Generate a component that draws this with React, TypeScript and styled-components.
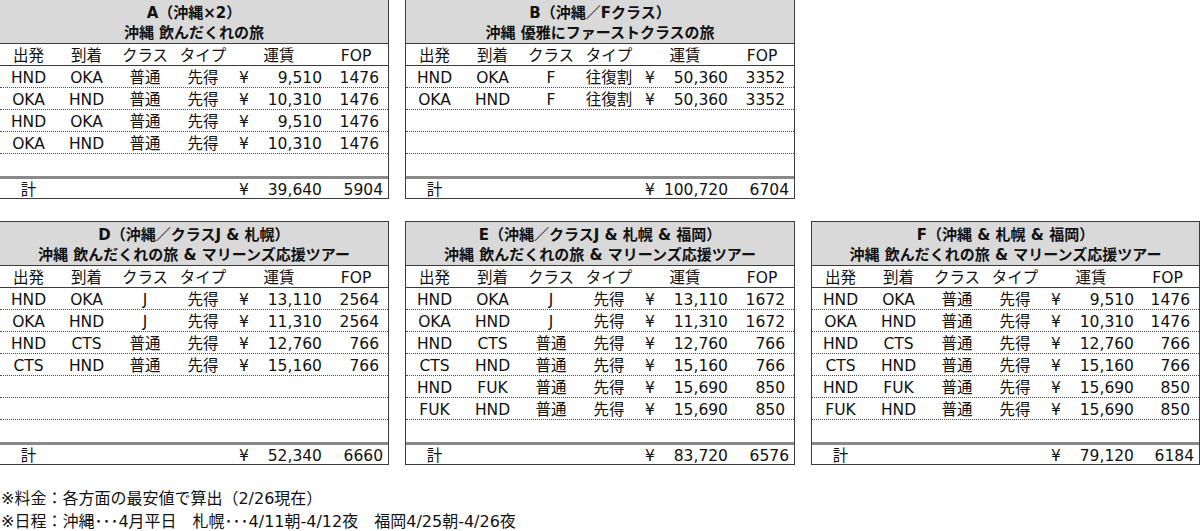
import React from 'react';
import styled, { createGlobalStyle } from 'styled-components';

type Leg = [string, string, string, string, string, string];

interface Plan {
  title: string;
  subtitle: string;
  legs: Leg[];
  rows: number;
  total: string;
  fop: string;
}

const OKINAWA: Leg[] = [
  ['HND', 'OKA', '普通', '先得', '9,510', '1476'],
  ['OKA', 'HND', '普通', '先得', '10,310', '1476'],
];

const SAPPORO: Leg[] = [
  ['HND', 'CTS', '普通', '先得', '12,760', '766'],
  ['CTS', 'HND', '普通', '先得', '15,160', '766'],
];

const FUKUOKA: Leg[] = [
  ['HND', 'FUK', '普通', '先得', '15,690', '850'],
  ['FUK', 'HND', '普通', '先得', '15,690', '850'],
];

const TOUR = '沖縄 飲んだくれの旅 & マリーンズ応援ツアー';

const topPlans: Plan[] = [
  {
    title: 'A（沖縄×2）',
    subtitle: '沖縄 飲んだくれの旅',
    legs: [...OKINAWA, ...OKINAWA],
    rows: 5,
    total: '39,640',
    fop: '5904',
  },
  {
    title: 'B（沖縄／Fクラス）',
    subtitle: '沖縄 優雅にファーストクラスの旅',
    legs: [
      ['HND', 'OKA', 'F', '往復割', '50,360', '3352'],
      ['OKA', 'HND', 'F', '往復割', '50,360', '3352'],
    ],
    rows: 5,
    total: '100,720',
    fop: '6704',
  },
];

const bottomPlans: Plan[] = [
  {
    title: 'D（沖縄／クラスJ & 札幌）',
    subtitle: TOUR,
    legs: [
      ['HND', 'OKA', 'J', '先得', '13,110', '2564'],
      ['OKA', 'HND', 'J', '先得', '11,310', '2564'],
      ...SAPPORO,
    ],
    rows: 7,
    total: '52,340',
    fop: '6660',
  },
  {
    title: 'E（沖縄／クラスJ & 札幌 & 福岡）',
    subtitle: TOUR,
    legs: [
      ['HND', 'OKA', 'J', '先得', '13,110', '1672'],
      ['OKA', 'HND', 'J', '先得', '11,310', '1672'],
      ...SAPPORO,
      ...FUKUOKA,
    ],
    rows: 7,
    total: '83,720',
    fop: '6576',
  },
  {
    title: 'F（沖縄 & 札幌 & 福岡）',
    subtitle: TOUR,
    legs: [...OKINAWA, ...SAPPORO, ...FUKUOKA],
    rows: 7,
    total: '79,120',
    fop: '6184',
  },
];

const GlobalStyle = createGlobalStyle`
  html, body {
    margin: 0;
    padding: 0;
    background: #ffffff;
  }
  body {
    font-family: "DejaVu Sans", "Noto Sans CJK JP", sans-serif;
    color: #111111;
    overflow: hidden;
  }
`;

const Page = styled.div`
  margin: -1px 0 0 -1px;
  width: 1202px;
`;

const Grid = styled.div`
  display: grid;
  grid-template-columns: 390px 390px 389px;
  column-gap: 16px;
  row-gap: 22px;
  align-items: start;
`;

const Sheet = styled.div`
  border: 1px solid #3c3c3c;
  background: #ffffff;
  font-size: 15.5px;
`;

const Title = styled.div`
  background: #d9d9d9;
  border-bottom: 1px solid #3c3c3c;
  box-sizing: border-box;
  height: 44px;
  padding-top: 3px;
  font-weight: bold;
  font-size: 15px;
  line-height: 20px;
  text-align: center;
  white-space: nowrap;
`;

const Row = styled.div<{ $kind?: 'head' | 'leg' | 'last' | 'total' }>`
  display: grid;
  grid-template-columns: 57px 59px 58px 58px 24px 70px 1fr;
  box-sizing: border-box;
  height: 22px;
  padding-top: ${(p) => (p.$kind === 'total' ? '1px' : '2px')};
  line-height: 20px;
  white-space: nowrap;
  border-bottom: ${(p) =>
    p.$kind === 'head' ? '1px solid #3c3c3c' : p.$kind === 'leg' ? '1px dotted #4a4a4a' : 'none'};
  border-top: ${(p) => (p.$kind === 'total' ? '3px solid #8a8a8a' : 'none')};
`;

const Cell = styled.span<{ $align?: 'left' | 'center' | 'right'; $pad?: number; $span?: number }>`
  text-align: ${(p) => p.$align ?? 'center'};
  padding-right: ${(p) => p.$pad ?? 0}px;
  grid-column: ${(p) => (p.$span ? `span ${p.$span}` : 'auto')};
`;

const Notes = styled.div`
  margin: 22px 0 0 2px;
  font-size: 16px;
  line-height: 23px;
  white-space: nowrap;
`;

const FareSheet: React.FC<{ plan: Plan }> = ({ plan }) => {
  const blanks = plan.rows - plan.legs.length;
  return (
    <Sheet>
      <Title>
        <div>{plan.title}</div>
        <div>{plan.subtitle}</div>
      </Title>
      <Row $kind="head">
        <Cell>出発</Cell>
        <Cell>到着</Cell>
        <Cell>クラス</Cell>
        <Cell>タイプ</Cell>
        <Cell $span={2}>運賃</Cell>
        <Cell $pad={2}>FOP</Cell>
      </Row>
      {plan.legs.map((leg, i) => (
        <Row key={i} $kind={i === plan.rows - 1 ? 'last' : 'leg'}>
          <Cell>{leg[0]}</Cell>
          <Cell>{leg[1]}</Cell>
          <Cell>{leg[2]}</Cell>
          <Cell>{leg[3]}</Cell>
          <Cell>¥</Cell>
          <Cell $align="right" $pad={4}>{leg[4]}</Cell>
          <Cell $align="right" $pad={9}>{leg[5]}</Cell>
        </Row>
      ))}
      {Array.from({ length: blanks }).map((_, i) => (
        <Row key={`b${i}`} $kind={plan.legs.length + i === plan.rows - 1 ? 'last' : 'leg'} />
      ))}
      <Row $kind="total">
        <Cell>計</Cell>
        <Cell />
        <Cell />
        <Cell />
        <Cell>¥</Cell>
        <Cell $align="right" $pad={4}>{plan.total}</Cell>
        <Cell $align="right" $pad={5}>{plan.fop}</Cell>
      </Row>
    </Sheet>
  );
};

const App: React.FC = () => (
  <Page>
    <GlobalStyle />
    <Grid>
      {topPlans.map((p) => (
        <FareSheet key={p.title} plan={p} />
      ))}
      <div />
      {bottomPlans.map((p) => (
        <FareSheet key={p.title} plan={p} />
      ))}
    </Grid>
    <Notes>
      <div>※料金：各方面の最安値で算出（2/26現在）</div>
      <div>※日程：沖縄･･･4月平日　札幌･･･4/11朝-4/12夜　福岡4/25朝-4/26夜</div>
    </Notes>
  </Page>
);

export default App;
